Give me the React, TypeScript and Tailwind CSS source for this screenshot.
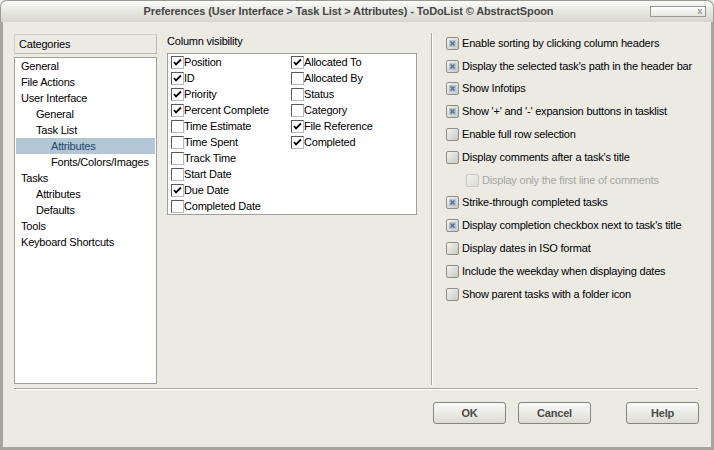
import React from "react";

const tree: { label: string; level: number; selected?: boolean }[] = [
  { label: "General", level: 0 },
  { label: "File Actions", level: 0 },
  { label: "User Interface", level: 0 },
  { label: "General", level: 1 },
  { label: "Task List", level: 1 },
  { label: "Attributes", level: 2, selected: true },
  { label: "Fonts/Colors/Images", level: 2 },
  { label: "Tasks", level: 0 },
  { label: "Attributes", level: 1 },
  { label: "Defaults", level: 1 },
  { label: "Tools", level: 0 },
  { label: "Keyboard Shortcuts", level: 0 },
];

const colsLeft: [string, boolean][] = [
  ["Position", true],
  ["ID", true],
  ["Priority", true],
  ["Percent Complete", true],
  ["Time Estimate", false],
  ["Time Spent", false],
  ["Track Time", false],
  ["Start Date", false],
  ["Due Date", true],
  ["Completed Date", false],
];

const colsRight: [string, boolean][] = [
  ["Allocated To", true],
  ["Allocated By", false],
  ["Status", false],
  ["Category", false],
  ["File Reference", true],
  ["Completed", true],
];

const options: { label: string; checked: boolean; sub?: boolean; disabled?: boolean }[] = [
  { label: "Enable sorting by clicking column headers", checked: true },
  { label: "Display the selected task's path in the header bar", checked: true },
  { label: "Show Infotips", checked: true },
  { label: "Show '+' and '-' expansion buttons in tasklist", checked: true },
  { label: "Enable full row selection", checked: false },
  { label: "Display comments after a task's title", checked: false },
  { label: "Display only the first line of comments", checked: false, sub: true, disabled: true },
  { label: "Strike-through completed tasks", checked: true },
  { label: "Display completion checkbox next to task's title", checked: true },
  { label: "Display dates in ISO format", checked: false },
  { label: "Include the weekday when displaying dates", checked: false },
  { label: "Show parent tasks with a folder icon", checked: false },
];

function ListCheck({ checked }: { checked: boolean }) {
  return (
    <span className="w-[13px] h-[13px] shrink-0 bg-white border border-t-[#5a5a5a] border-l-[#5a5a5a] border-r-[#b8b8b8] border-b-[#b8b8b8] flex items-center justify-center">
      {checked && (
        <svg width="9" height="9" viewBox="0 0 9 9">
          <path d="M1 4 L3 6.5 L8 1.5" stroke="#000" strokeWidth="1.8" fill="none" />
        </svg>
      )}
    </span>
  );
}

function XpCheck({ checked, disabled }: { checked: boolean; disabled?: boolean }) {
  return (
    <span
      className={
        "w-[13px] h-[13px] shrink-0 rounded-[2px] border flex items-center justify-center " +
        (disabled
          ? "border-[#c8c8c2] bg-gradient-to-br from-[#f2f2ee] to-[#dcdcd6]"
          : "border-[#8e8e88] bg-gradient-to-br from-[#f4f4f0] to-[#c9c9c2]")
      }
    >
      {checked && (
        <span className="w-[7px] h-[7px] bg-[#b4c2d2] flex items-center justify-center">
          <svg width="7" height="7" viewBox="0 0 7 7">
            <path d="M1.5 1.5 L5.5 5.5 M5.5 1.5 L1.5 5.5" stroke="#4f6f93" strokeWidth="1.4" />
          </svg>
        </span>
      )}
    </span>
  );
}

function XpButton({ label }: { label: string }) {
  return (
    <button className="w-[73px] h-[22px] rounded-[3px] border border-[#85857f] bg-gradient-to-b from-[#fbfbf9] to-[#dcdcd4] text-[11px] font-bold text-[#4a4a4a] tracking-[-0.2px]">
      {label}
    </button>
  );
}

export default function App() {
  return (
    <div className="w-[714px] h-[450px] flex flex-col bg-[#ebebe4] font-['Liberation_Sans',Arial,sans-serif] text-[11px] text-black leading-none tracking-[-0.2px]">
      {/* title bar */}
      <div className="h-[22px] shrink-0 flex items-center rounded-t-[7px] border border-b-0 border-[#9a9a94] bg-gradient-to-b from-[#fafaf8] via-[#e8e8e2] to-[#d6d6ce]">
        <div className="flex-1 pl-[46px] text-center font-bold text-[11px] text-[#454545] tracking-[-0.12px]">
          Preferences (User Interface &gt; Task List &gt; Attributes) - ToDoList © AbstractSpoon
        </div>
        <div className="w-[56px] h-[11px] mr-[7px] border border-[#9a9a94] bg-gradient-to-b from-white to-[#e6e6e0] flex items-center justify-end pr-[3px]">
          <span className="text-[9px] font-bold text-[#9c9c96]">x</span>
        </div>
      </div>

      <div className="flex-1 flex flex-col border-x-[3px] border-b-[3px] border-[#a5a59e]">
        <div className="h-[366px] flex pt-[10px] pl-[11px]">
          {/* categories */}
          <div className="w-[143px] mt-[2px] flex flex-col">
            <div className="h-[20px] border border-[#cfcfc8] border-r-[#b9b9b2] border-b-[#b9b9b2] flex items-center pl-[4px]">
              Categories
            </div>
            <div className="mt-[3px] h-[327px] bg-white border border-[#a0a09a] pl-px">
              {tree.map((t, i) => (
                <div
                  key={i}
                  className={
                    "h-[16px] flex items-center " +
                    (t.selected ? "bg-[#b3c6d6] text-[#24476b] mr-px" : "")
                  }
                  style={{ paddingLeft: 5 + t.level * 15 }}
                >
                  {t.label}
                </div>
              ))}
            </div>
          </div>

          {/* column visibility */}
          <div className="w-[250px] ml-[10px] mt-[2px] flex flex-col">
            <div className="h-[14px] flex items-center">Column visibility</div>
            <div className="mt-[5px] h-[162px] bg-white border border-[#a0a09a] flex pl-[3px]">
              <div className="w-[120px] flex flex-col">
                {colsLeft.map(([l, c]) => (
                  <div key={l} className="h-[16px] flex items-center">
                    <ListCheck checked={c} />
                    <span>{l}</span>
                  </div>
                ))}
              </div>
              <div className="flex flex-col">
                {colsRight.map(([l, c]) => (
                  <div key={l} className="h-[16px] flex items-center">
                    <ListCheck checked={c} />
                    <span>{l}</span>
                  </div>
                ))}
              </div>
            </div>
          </div>

          {/* separator */}
          <div className="ml-[14px] mt-px h-[352px] w-[2px] border-l border-[#a8a8a0] bg-white/80" />

          {/* options */}
          <div className="ml-[13px] flex flex-col">
            {options.map((o) => (
              <div
                key={o.label}
                className={"h-[22.8px] flex items-center gap-[3px] " + (o.sub ? "pl-[20px]" : "")}
              >
                <XpCheck checked={o.checked} disabled={o.disabled} />
                <span className={o.disabled ? "text-[#a5a59f]" : ""}>{o.label}</span>
              </div>
            ))}
          </div>
        </div>

        <div className="ml-[11px] mr-[13px] h-[2px] border-t border-[#a8a8a0] bg-white" />

        <div className="mt-[12px] flex justify-end pr-[12px]">
          <XpButton label="OK" />
          <div className="ml-[12px]">
            <XpButton label="Cancel" />
          </div>
          <div className="ml-[35px]">
            <XpButton label="Help" />
          </div>
        </div>
      </div>
    </div>
  );
}
